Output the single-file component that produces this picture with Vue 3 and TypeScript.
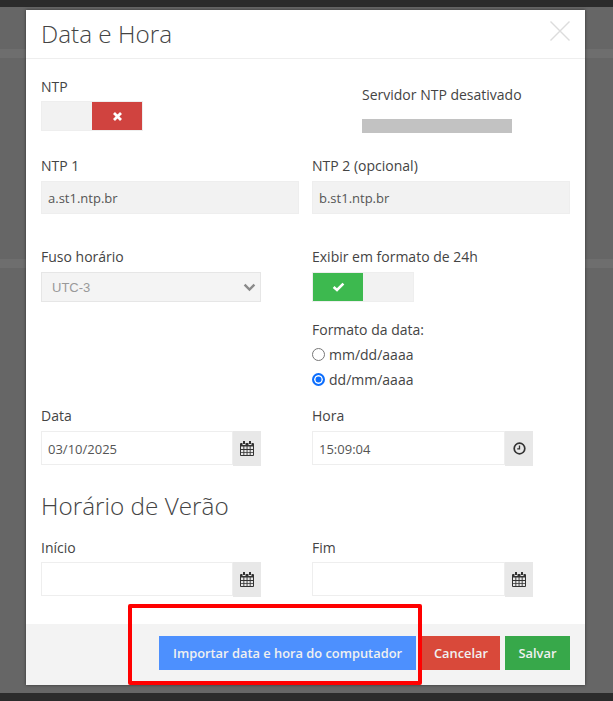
<script setup lang="ts">
const radios = [
  { label: 'mm/dd/aaaa', checked: false },
  { label: 'dd/mm/aaaa', checked: true },
]
const calendarPath = 'M3 0h2v3H3zM9 0h2v3H9zM1 2h1.500v2h3V2h3v2h3V2H13a1 1 0 0 1 1 1v11a1 1 0 0 1-1 1H1a1 1 0 0 1-1-1V3a1 1 0 0 1 1-1zM1 5.500V8h2.400V5.500zM4.300 5.500V8h2.300V5.500zM7.500 5.500V8h2.200V5.500zM10.600 5.500V8H13V5.500zM1 8.900v2h2.400v-2zM4.300 8.900v2h2.300v-2zM7.500 8.900v2h2.200v-2zM10.600 8.900v2H13v-2zM1 11.800V14h2.400v-2.200zM4.300 11.800V14h2.300v-2.200zM7.500 11.800V14h2.200v-2.200zM10.600 11.800V14H13v-2.200z'
</script>

<template>
  <div class="page">
    <div class="topbar"></div>
    <div class="bottombar"></div>
    <div class="band band-a"></div>
    <div class="band band-b"></div>
    <div class="modal">
      <header class="head">
        <h4>Data e Hora</h4>
        <svg class="close" width="22" height="22" viewBox="0 0 22 22"><path d="M1.500 1.500 20.500 20.500M20.500 1.500 1.500 20.500" stroke="#dcdcdc" stroke-width="1.400" fill="none"/></svg>
      </header>
      <section class="body">
        <div class="row r1">
          <div class="col">
            <label class="lb">NTP</label>
            <div class="toggle">
              <span class="off"></span>
              <span class="red">
                <svg width="11" height="11" viewBox="0 0 11 11"><path d="M2 2 9 9M9 2 2 9" stroke="#fff" stroke-width="2.800" fill="none"/></svg>
              </span>
            </div>
          </div>
          <div class="col status">
            <span class="status-text">Servidor NTP desativado</span>
            <div class="status-bar"></div>
          </div>
        </div>
        <div class="row r2">
          <div class="col">
            <label class="lb">NTP 1</label>
            <div class="input ro">a.st1.ntp.br</div>
          </div>
          <div class="col">
            <label class="lb">NTP 2 (opcional)</label>
            <div class="input ro">b.st1.ntp.br</div>
          </div>
        </div>
        <div class="row r3">
          <div class="col">
            <label class="lb">Fuso horário</label>
            <div class="select">
              <span>UTC-3</span>
              <svg width="13" height="9" viewBox="0 0 13 9"><path d="M1.600 1.600 6.500 6.500 11.400 1.600" stroke="#8a8a8a" stroke-width="2.400" fill="none"/></svg>
            </div>
          </div>
          <div class="col">
            <label class="lb">Exibir em formato de 24h</label>
            <div class="toggle">
              <span class="green">
                <svg width="13" height="10" viewBox="0 0 13 10"><path d="M1.600 5 5 8 11.400 1.600" stroke="#fff" stroke-width="2.600" fill="none"/></svg>
              </span>
              <span class="off"></span>
            </div>
            <div class="fmt">Formato da data:</div>
            <div v-for="r in radios" :key="r.label" class="radio">
              <span class="dot" :class="{ on: r.checked }"></span>
              <span>{{ r.label }}</span>
            </div>
          </div>
        </div>
        <div class="row r4">
          <div class="col">
            <label class="lb">Data</label>
            <div class="group">
              <div class="input grow">03/10/2025</div>
              <span class="addon">
                <svg width="14" height="15" viewBox="0 0 14 15"><path fill="#333" fill-rule="evenodd" :d="calendarPath"/></svg>
              </span>
            </div>
          </div>
          <div class="col">
            <label class="lb">Hora</label>
            <div class="group wide">
              <div class="input grow">15:09:04</div>
              <span class="addon">
                <svg width="13" height="13" viewBox="0 0 13 13"><circle cx="6.500" cy="6.500" r="5.300" stroke="#333" stroke-width="1.700" fill="none"/><path d="M6.500 3.500v3.300H4.200" stroke="#333" stroke-width="1.300" fill="none"/></svg>
              </span>
            </div>
          </div>
        </div>
        <h4 class="sub">Horário de Verão</h4>
        <div class="row r5">
          <div class="col">
            <label class="lb">Início</label>
            <div class="group">
              <div class="input grow"></div>
              <span class="addon">
                <svg width="14" height="15" viewBox="0 0 14 15"><path fill="#333" fill-rule="evenodd" :d="calendarPath"/></svg>
              </span>
            </div>
          </div>
          <div class="col">
            <label class="lb">Fim</label>
            <div class="group wide">
              <div class="input grow"></div>
              <span class="addon">
                <svg width="14" height="15" viewBox="0 0 14 15"><path fill="#333" fill-rule="evenodd" :d="calendarPath"/></svg>
              </span>
            </div>
          </div>
        </div>
      </section>
      <footer class="foot">
        <button class="btn blue">Importar data e hora do computador</button>
        <button class="btn redb">Cancelar</button>
        <button class="btn greenb">Salvar</button>
      </footer>
      <div class="mark"></div>
    </div>
  </div>
</template>

<style>
html, body { margin: 0; background: #666; }
</style>

<style scoped>
.page {
  position: relative;
  width: 613px;
  height: 701px;
  overflow: hidden;
  background: #666;
  font-family: "Open Sans", sans-serif;
  color: #444;
  padding-top: 10px;
  box-sizing: border-box;
}
.topbar { position: absolute; left: 0; right: 0; top: 0; height: 7px; background: #2b2b2b; }
.bottombar { position: absolute; left: 0; right: 0; bottom: 0; height: 8px; background: #2b2b2b; }
.band { position: absolute; left: 0; right: 0; height: 9px; background: #6e6e6e; }
.band-a { top: 49px; }
.band-b { top: 259px; }
.modal {
  position: relative;
  margin-left: 26px;
  width: 559px;
  height: 675px;
  background: #fff;
  box-shadow: 0 0 3px rgba(0,0,0,.5);
  display: flex;
  flex-direction: column;
}
.head {
  height: 49px;
  box-sizing: border-box;
  border-bottom: 1px solid #eee;
  padding: 0 15px 2px;
  display: flex;
  align-items: center;
  justify-content: space-between;
}
.head h4, .sub {
  margin: 0;
  font-size: 24.300px;
  font-weight: 300;
  color: #444;
  line-height: 33px;
}
.close { margin-top: -4px; margin-right: -1px; }
.body { flex: 1; padding: 0 15px; }
.row { display: grid; grid-template-columns: 258px 258px; column-gap: 13px; }
.r1 { padding-top: 19px; height: 98px; box-sizing: border-box; }
.r1 .lb { margin-bottom: 5px; }
.r2 { height: 91px; }
.r3 { height: 159px; }
.r4 { height: 82px; }
.r5 { margin-top: 17px; }
.r5 .lb { margin-bottom: 5px; }
.lb { display: block; font-size: 14px; line-height: 18px; color: #444; margin-bottom: 6px; }
.toggle { display: flex; width: 102px; height: 30px; box-sizing: border-box; background: #f2f2f2; border: 1px solid #eee; }
.off { flex: 1; }
.red, .green { flex: 1; display: flex; align-items: center; justify-content: center; }
.red { background: #d0433f; }
.green { background: #3db94f; }
.status { padding-left: 50px; padding-top: 8px; }
.status-text { display: block; font-size: 14px; line-height: 18px; color: #444; }
.status-bar { width: 150px; height: 14px; margin-top: 15px; background: #c2c2c2; }
.input {
  height: 33px;
  box-sizing: border-box;
  border: 1px solid #eee;
  padding: 0 6px;
  font-size: 13px;
  line-height: 32px;
  color: #555;
}
.ro { background: #f2f2f2; }
.select {
  width: 220px;
  height: 30px;
  box-sizing: border-box;
  background: #f4f4f4;
  border: 1px solid #e6e6e6;
  display: flex;
  align-items: center;
  justify-content: space-between;
  padding: 0 4px 0 10px;
  font-family: "Liberation Sans", sans-serif;
  font-size: 13px;
  color: #999;
}
.fmt { margin-top: 19px; font-size: 14px; line-height: 18px; color: #444; }
.radio { display: flex; align-items: center; gap: 4px; height: 25px; font-size: 14px; color: #444; }
.fmt + .radio { margin-top: 3px; }
.dot { width: 13px; height: 13px; box-sizing: border-box; border-radius: 50%; border: 1px solid #777; background: #fff; }
.dot.on { border: 2px solid #0d6efd; box-shadow: inset 0 0 0 1.500px #fff; background: #0d6efd; }
.group { display: flex; width: 220px; height: 35px; }
.group.wide { width: 221px; }
.group .input { height: 34px; line-height: 34px; }
.grow { flex: 1; min-width: 0; }
.addon { width: 28px; height: 35px; background: #e8e8e8; display: flex; align-items: center; justify-content: center; }
.sub { height: 33px; }
.foot {
  height: 61px;
  box-sizing: border-box;
  background: #f3f3f3;
  padding: 12px 15px 0 0;
  display: flex;
  justify-content: flex-end;
  gap: 5px;
}
.btn {
  height: 34px;
  border: 0;
  padding: 0;
  color: #f0f0f0;
  font-family: "Open Sans", sans-serif;
  font-size: 12.850px;
  font-weight: 600;
}
.blue { width: 257px; background: #4d90fe; margin-right: 1px; }
.redb { width: 78px; background: #d9493a; }
.greenb { width: 65px; background: #37a84a; }
.mark {
  position: absolute;
  left: 102px;
  top: 594px;
  width: 294px;
  height: 81px;
  box-sizing: border-box;
  border: 4px solid #ff0000;
  border-radius: 2px;
  pointer-events: none;
}
</style>
